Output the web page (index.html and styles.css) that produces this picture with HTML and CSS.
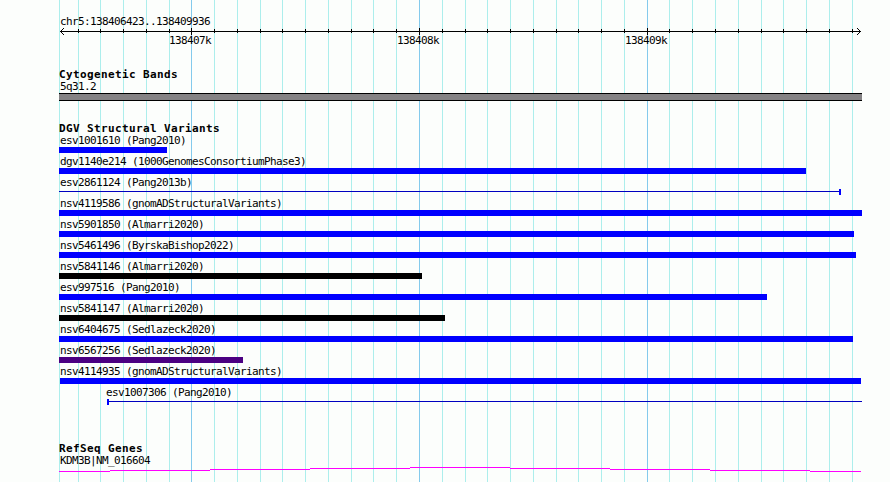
FILE: index.html
```
<!DOCTYPE html>
<html lang="en">
  <head>
    <meta charset="UTF-8" />
    <title>chr5:138406423..138409936</title>
    <link rel="stylesheet" href="styles.css">
  </head>
  <body>
    <svg class="grid" width="890" height="482" shape-rendering="crispEdges">
      <path id="minor" class="minor" />
      <path id="major" class="major" />
    </svg>

    <div id="browser">
      <div class="track ruler">
        <div class="label">chr5:138406423..138409936</div>
        <svg class="scale" width="803" height="9" shape-rendering="crispEdges">
          <path d="M2 4.5H802" />
          <path d="M1 4.5h2M2 3.5h1M3 2.5h1M4 1.5h1M2 5.5h1M3 6.5h1M4 7.5h1" />
          <path d="M800 4.5h2M800 3.5h1M799 2.5h1M798 1.5h1M800 5.5h1M799 6.5h1M798 7.5h1" />
          <path id="ticks" />
        </svg>
        <div class="positions label">
          <span>138407k</span>
          <span>138408k</span>
          <span>138409k</span>
        </div>
      </div>

      <div class="track cytoband">
        <h2>Cytogenetic Bands</h2>
        <div class="label">5q31.2</div>
        <div class="band"></div>
      </div>

      <div class="track variants">
        <h2>DGV Structural Variants</h2>
        <div id="features"></div>
      </div>

      <div class="track genes">
        <h2>RefSeq Genes</h2>
        <div class="label">KDM3B|NM_016604</div>
        <svg class="gene" width="803" height="6" shape-rendering="crispEdges">
          <path d="M0 4.5H51M51 3.5H151M151 2.5H251M251 1.5H351M351 0.5H451M451 1.5H551M551 2.5H651M651 3.5H751M751 4.5H802" />
        </svg>
      </div>
    </div>

    <script src="tracks.js"></script>
  </body>
</html>
```
FILE: styles.css
```
html,
body {
  margin: 0;
  padding: 0;
  background-color: #fcfefc;
  font-family: 'DejaVu Sans Mono', monospace;
  color: #000;
}

body {
  width: 890px;
  height: 482px;
  overflow: hidden;
  position: relative;
}

/* vertical guide lines behind every track */
.grid {
  position: absolute;
  top: 0;
  left: 0;
}

.grid path,
.scale path,
.gene path {
  fill: none;
  stroke-width: 1;
}

.minor {
  stroke: #aceeec;
}

.major {
  stroke: #84caec;
}

#browser {
  position: relative;
  width: 803px;
  padding: 16px 0 0 59px;
}

svg {
  display: block;
}

h2 {
  margin: 0;
  height: 12px;
  font-size: 11px;
  line-height: 12px;
  letter-spacing: 0.38px;
  white-space: pre;
}

.label {
  height: 12px;
  padding-left: 1px;
  font-size: 11px;
  line-height: 12px;
  letter-spacing: -0.62px;
  white-space: pre;
}

.ruler {
  height: 53px;
}

.scale {
  margin-top: -1px;
}

.scale path {
  stroke: #000;
}

.positions {
  display: flex;
  gap: 186px;
  padding-left: 110px;
  margin-top: -1px;
}

.positions span {
  width: 42px;
}

.cytoband {
  height: 54px;
}

.band {
  height: 6px;
  background-color: #848284;
  border-top: 1px solid #000;
  border-bottom: 1px solid #000;
}

.variants {
  height: 320px;
}

.feature {
  height: 21px;
}

.bar {
  height: 6px;
  background-color: #0000ff;
}

.loss {
  background-color: #000;
}

.complex {
  background-color: #4b0082;
}

.span {
  display: flex;
  background: linear-gradient(#0000c0, #0000c0) 0 2px / 100% 1px no-repeat;
}

.span.right {
  justify-content: flex-end;
}

.span i {
  width: 2px;
  height: 6px;
  background-color: #0000ff;
}

.gene path {
  stroke: #ff00ff;
}
```
FILE: tracks.js
```
var majors = [191, 419, 647];
var minors = [59, 78, 100, 123, 146, 169, 214, 237, 260, 282, 305, 328, 351, 373, 396,
  442, 465, 487, 510, 533, 556, 578, 601, 624, 669, 692, 715, 738, 761, 783, 806, 829, 852];

// start and end are measured from the left edge of the panel
var features = [
  { name: 'esv1001610 (Pang2010)', start: 0, end: 108, type: '' },
  { name: 'dgv1140e214 (1000GenomesConsortiumPhase3)', start: 0, end: 747, type: '' },
  { name: 'esv2861124 (Pang2013b)', start: 0, end: 782, type: 'span right' },
  { name: 'nsv4119586 (gnomADStructuralVariants)', start: 0, end: 803, type: '' },
  { name: 'nsv5901850 (Almarri2020)', start: 0, end: 795, type: '' },
  { name: 'nsv5461496 (ByrskaBishop2022)', start: 0, end: 797, type: '' },
  { name: 'nsv5841146 (Almarri2020)', start: 0, end: 363, type: 'loss' },
  { name: 'esv997516 (Pang2010)', start: 0, end: 708, type: '' },
  { name: 'nsv5841147 (Almarri2020)', start: 0, end: 386, type: 'loss' },
  { name: 'nsv6404675 (Sedlazeck2020)', start: 0, end: 794, type: '' },
  { name: 'nsv6567256 (Sedlazeck2020)', start: 0, end: 184, type: 'complex' },
  { name: 'nsv4114935 (gnomADStructuralVariants)', start: 1, end: 802, type: '' },
  { name: 'esv1007306 (Pang2010)', start: 48, end: 803, type: 'span' }
];

function lines(xs, top, bottom) {
  return xs.map(function(x) {
    return 'M' + (x + 0.5) + ' ' + top + 'V' + bottom;
  }).join('');
}

function fromPanel(x) {
  return x - 59;
}

document.getElementById('minor').setAttribute('d', lines(minors, 0, 482));
document.getElementById('major').setAttribute('d', lines(majors, 0, 482));
document.getElementById('ticks').setAttribute('d',
  lines(minors.slice(1).map(fromPanel), 2, 6) + lines(majors.map(fromPanel), 1, 8));

var list = document.getElementById('features');
features.forEach(function(f) {
  var row = document.createElement('div');
  row.className = 'feature';

  var label = document.createElement('div');
  label.className = 'label';
  label.textContent = f.name;
  // labels sit just before the start of their feature
  label.style.marginLeft = Math.max(0, f.start - 2) + 'px';

  var bar = document.createElement('div');
  bar.className = 'bar ' + f.type;
  bar.style.marginLeft = f.start + 'px';
  bar.style.width = (f.end - f.start) + 'px';
  if (f.type.indexOf('span') === 0) {
    bar.appendChild(document.createElement('i'));
  }

  row.appendChild(label);
  row.appendChild(bar);
  list.appendChild(row);
});
```
